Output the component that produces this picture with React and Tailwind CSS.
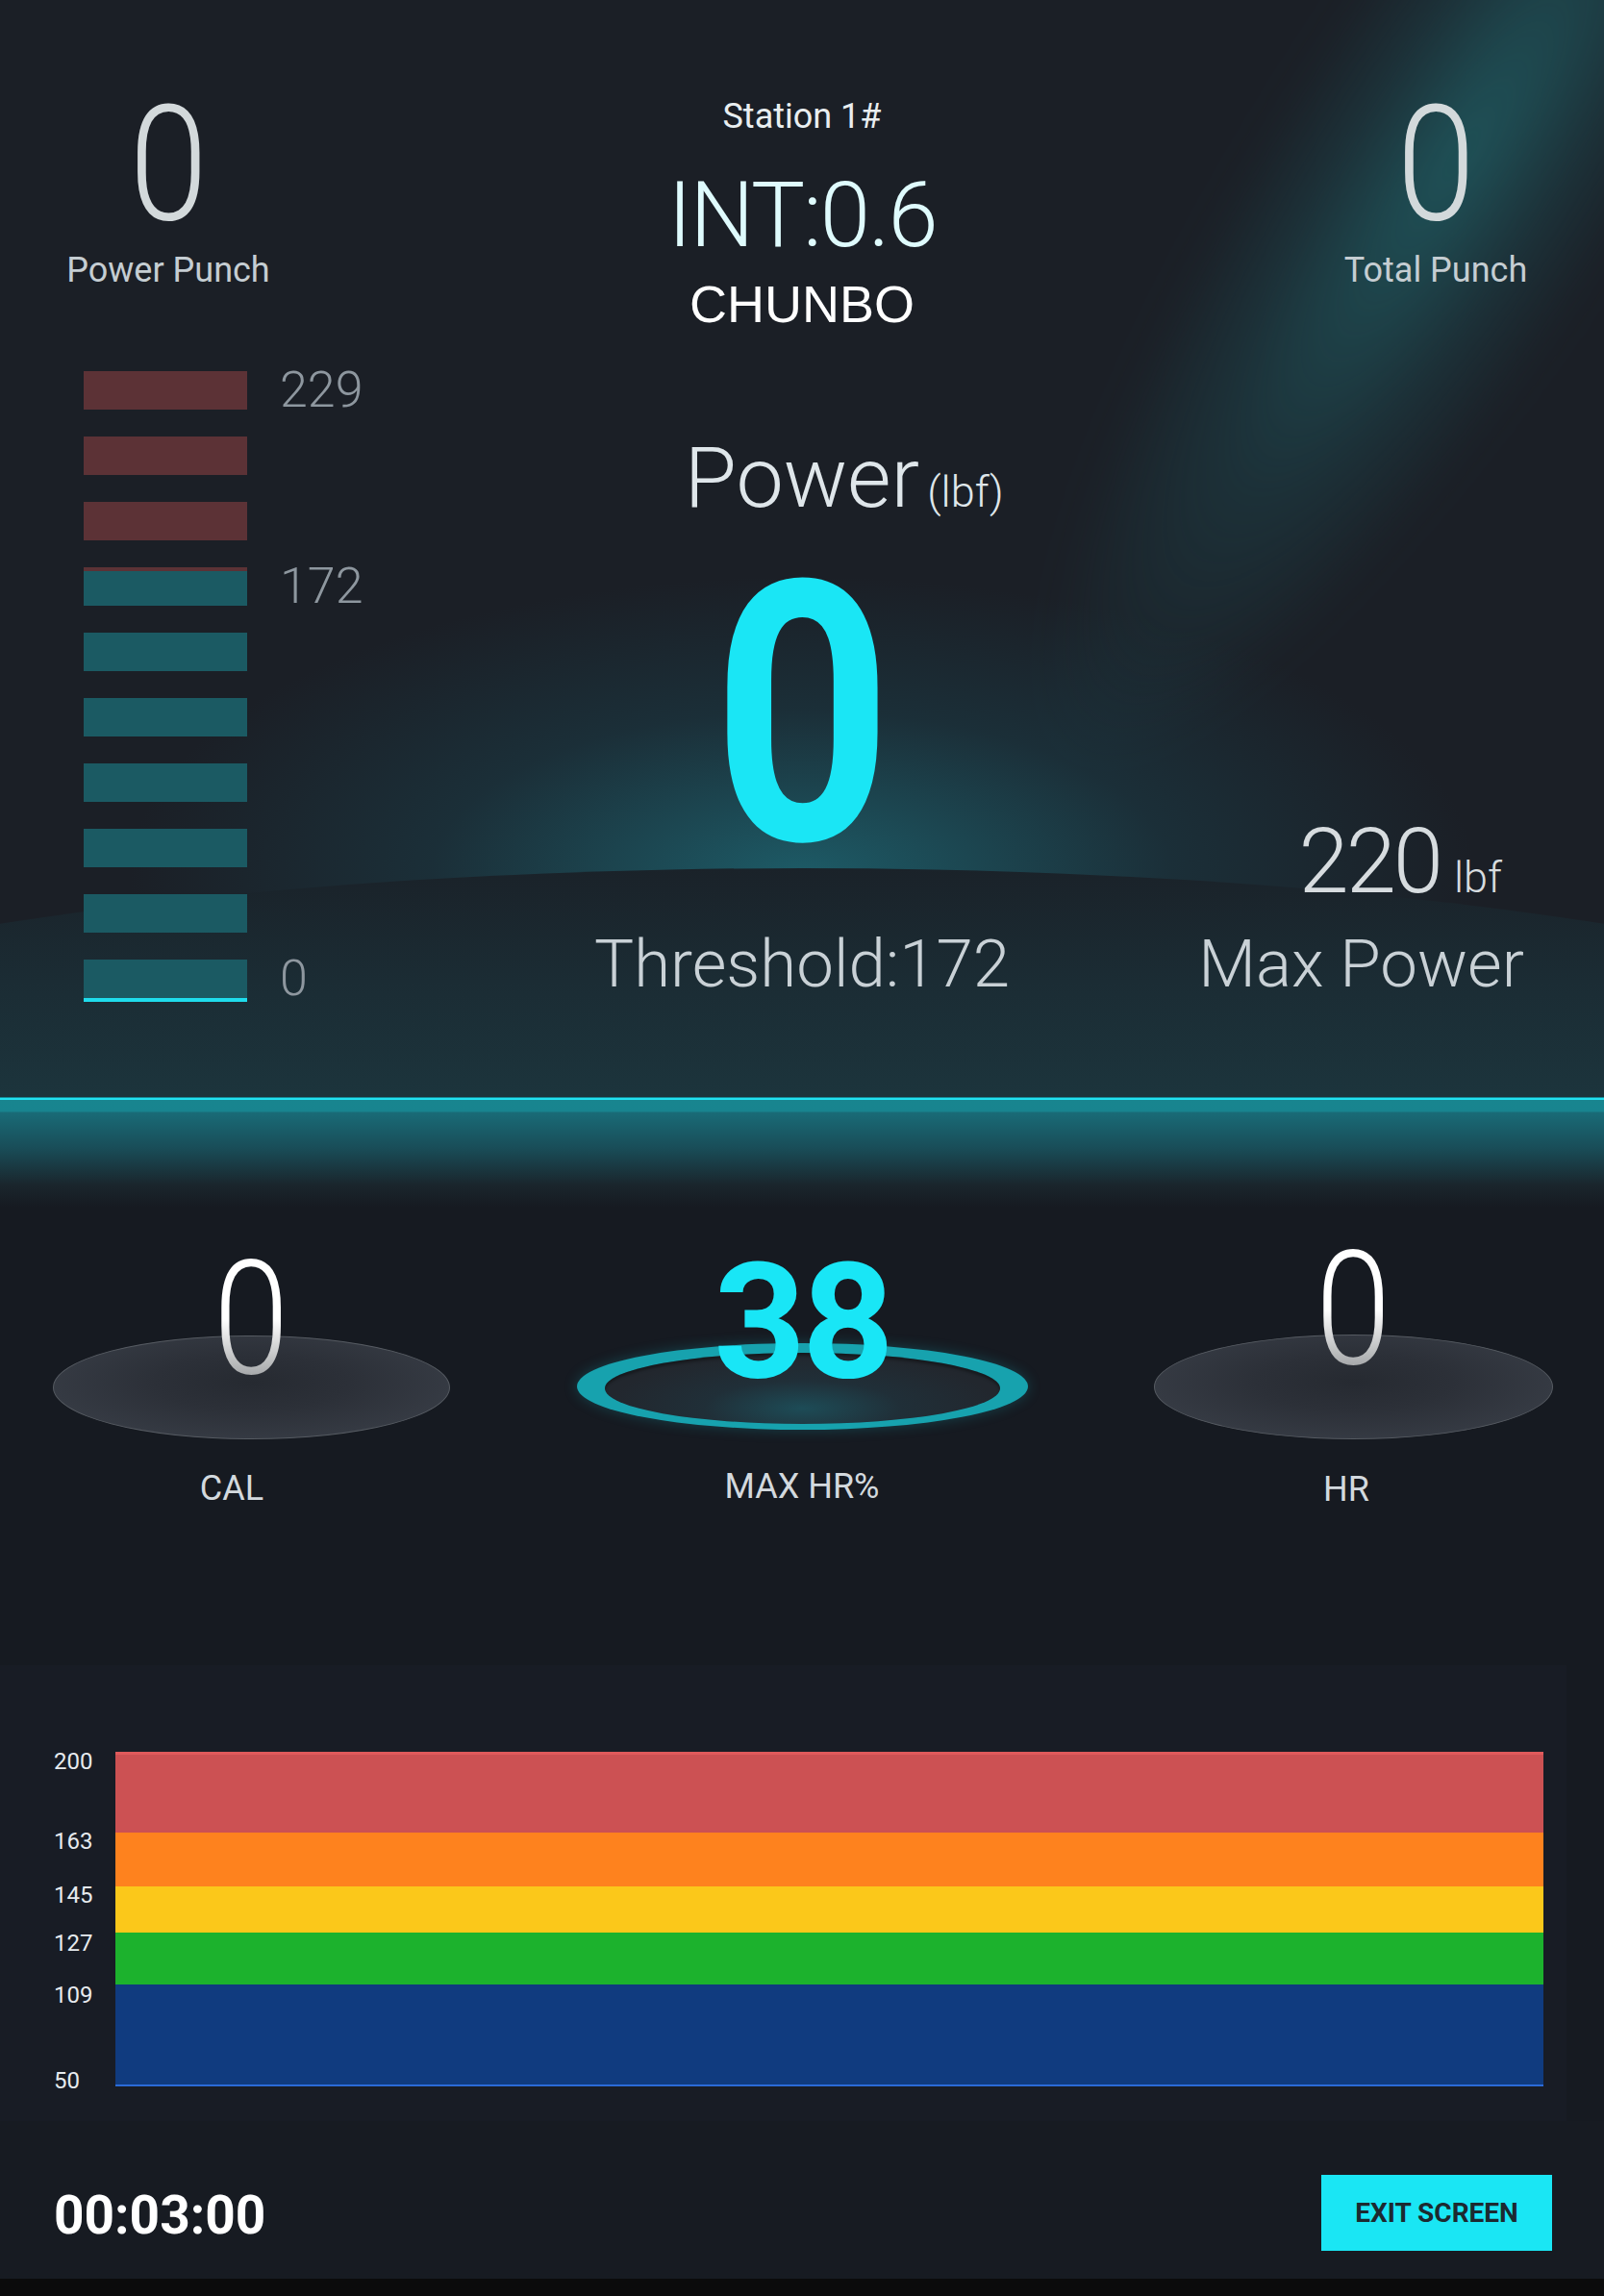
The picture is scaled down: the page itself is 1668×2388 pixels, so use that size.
export default function App() {
  const bars = [
    { c: "bg-[#5c3236]", label: "229" },
    { c: "bg-[#5c3236]" },
    { c: "bg-[#5c3236]" },
    { c: "bg-[#1b5a63] shadow-[inset_0_4px_0_#5c3236]", label: "172" },
    { c: "bg-[#1b5a63]" },
    { c: "bg-[#1b5a63]" },
    { c: "bg-[#1b5a63]" },
    { c: "bg-[#1b5a63]" },
    { c: "bg-[#1b5a63]" },
    { c: "bg-[#1b5a63] shadow-[0_4px_0_#1fdcec]", label: "0" },
  ];

  return (
    <div className="w-[1668px] min-h-[2388px] overflow-hidden bg-[#161a21] font-['Roboto','Liberation_Sans',sans-serif]">
      {/* TOP SECTION */}
      <section className="relative h-[1141px] overflow-hidden bg-[#1b1f26]">
        {/* light beam top right */}
        <div className="pointer-events-none absolute left-[1330px] top-[-590px] h-[1500px] w-[380px] rotate-[33deg] bg-[radial-gradient(closest-side,rgba(32,96,102,0.8),rgba(30,78,86,0.38)_55%,transparent)] blur-[20px]" />
        {/* glow above arc */}
        <div className="pointer-events-none absolute left-[134px] top-[600px] h-[620px] w-[1400px] bg-[radial-gradient(closest-side,rgba(29,94,106,0.95),rgba(27,66,78,0.45)_55%,transparent)]" />
        {/* arc */}
        <div className="pointer-events-none absolute left-[-566px] top-[903px] h-[586px] w-[2800px] rounded-[50%] bg-[linear-gradient(180deg,#1a2229_0%,#1b2c34_20%,#1c343c_40%)]" />

        <div className="relative">
          {/* header */}
          <div className="grid h-[380px] grid-cols-[350px_968px_350px]">
            <div className="flex flex-col items-center pt-[88px]">
              <div className="scale-x-[0.88] text-[167px] font-light leading-none text-[#d3d9db]">0</div>
              <div className="mt-[8px] whitespace-nowrap text-[36px] leading-none text-[#c5cdd2]">Power Punch</div>
            </div>
            <div className="flex flex-col items-center pt-[103px]">
              <div className="whitespace-nowrap text-[36px] leading-none text-[#e9eef0]">Station 1#</div>
              <div className="mt-[38px] whitespace-nowrap text-[94px] font-light leading-none tracking-[-2px] text-[#dffbfd]">INT:0.6</div>
              <div className="mt-[18px] font-['Liberation_Sans',sans-serif] text-[54px] leading-none text-white">CHUNBO</div>
            </div>
            <div className="flex flex-col items-center pt-[88px]">
              <div className="scale-x-[0.88] text-[167px] font-light leading-none text-[#d3d9db]">0</div>
              <div className="mt-[8px] whitespace-nowrap text-[36px] leading-none text-[#c5cdd2]">Total Punch</div>
            </div>
          </div>

          {/* middle */}
          <div className="grid grid-cols-[350px_968px_350px]">
            <div className="flex flex-col gap-[28px] pl-[87px] pt-[6px]">
              {bars.map((b, i) => (
                <div key={i} className="flex h-[40px] items-center">
                  <div className={`h-[40px] w-[170px] shrink-0 ${b.c}`} />
                  {b.label && (
                    <span className="ml-[34px] shrink-0 whitespace-nowrap text-[52px] font-light leading-none text-[#8e979f]">{b.label}</span>
                  )}
                </div>
              ))}
            </div>
            <div className="flex flex-col items-center pt-[73px]">
              <div className="grid w-full grid-cols-[1fr_auto_1fr] items-baseline">
                <span />
                <span className="text-[88px] font-light leading-none text-[#dfe6ea]">Power</span>
                <span className="ml-[8px] text-[45px] font-light leading-none text-[#dfe6ea]">(lbf)</span>
              </div>
              <div className="mt-[14px] scale-x-[0.86] text-[378px] font-bold leading-none text-[#1ae6f5]">0</div>
              <div className="mt-[35px] whitespace-nowrap text-[69px] font-light leading-none text-[#c9d1d6]">Threshold:172</div>
            </div>
            <div className="flex flex-col items-end justify-end pb-[1px] pr-[83px]">
              <div className="mr-[23px] flex items-baseline whitespace-nowrap">
                <span className="text-[94px] font-light leading-none tracking-[-3px] text-[#d7dcdf]">220</span>
                <span className="ml-[14px] text-[45px] font-light leading-none text-[#d7dcdf]">lbf</span>
              </div>
              <div className="mt-[25px] shrink-0 whitespace-nowrap text-[69px] font-light leading-none text-[#c9d1d6]">Max Power</div>
            </div>
          </div>
        </div>
      </section>

      {/* divider line */}
      <div className="h-[3px] border-t border-[#158e9a] bg-[#22e0f0]" />
      <div className="h-[112px] bg-[linear-gradient(180deg,#18858f_0px,#18848f_12px,#196b77_13px,#194d58_50px,#1a262d_88px,#161a21_112px)]" />

      {/* stats */}
      <div className="flex items-start justify-center gap-[103px]">
        <div className="flex w-[470px] flex-col items-center pt-[33px]">
          <div className="relative z-10 scale-x-[0.85] bg-[linear-gradient(180deg,#ffffff_50%,#a9abad_84%)] bg-clip-text text-[166px] font-light leading-none text-transparent">0</div>
          <div className="-mt-[66px] h-[108px] w-[413px] rounded-[50%] border border-[#565b62] bg-[radial-gradient(ellipse_at_50%_45%,#262a31_0%,#2c3038_35%,#363b44_75%)]" />
          <div className="mr-[40px] mt-[33px] text-[36px] leading-none text-[#d3d9de]">CAL</div>
        </div>
        <div className="flex w-[470px] flex-col items-center pt-[36px]">
          <div className="relative z-10 text-[167px] font-bold leading-none tracking-[-4px] text-[#19e6f6]">38</div>
          <div className="-mt-[62px] flex h-[90px] w-[469px] justify-center rounded-[50%] bg-[#17a2ae] shadow-[0_0_14px_rgba(23,162,174,0.3)]">
            <div className="mt-[10px] h-[74px] w-[411px] rounded-[50%] bg-[radial-gradient(ellipse_at_50%_78%,#1d4c57_0%,#202f38_35%,#22272e_70%)] shadow-[inset_0_3px_3px_rgba(0,0,0,0.35)]" />
          </div>
          <div className="mt-[41px] whitespace-nowrap text-[36px] leading-none text-[#d3d9de]">MAX HR%</div>
        </div>
        <div className="flex w-[470px] flex-col items-center pt-[23px]">
          <div className="relative z-10 scale-x-[0.85] bg-[linear-gradient(180deg,#ffffff_50%,#a9abad_84%)] bg-clip-text text-[166px] font-light leading-none text-transparent">0</div>
          <div className="-mt-[57px] h-[109px] w-[415px] rounded-[50%] border border-[#565b62] bg-[radial-gradient(ellipse_at_50%_45%,#262a31_0%,#2c3038_35%,#363b44_75%)]" />
          <div className="mr-[14px] mt-[34px] text-[36px] leading-none text-[#d3d9de]">HR</div>
        </div>
      </div>

      {/* chart panel */}
      <div className="mt-[165px] w-[1629px] bg-[#181c25] pb-[36px] pr-[24px] pt-[90px]">
        <div className="flex h-[84px]">
          <div className="-mt-[2px] w-[120px] pl-[56px] text-[24px] leading-none text-[#e6eaee]">200</div>
          <div className="flex-1 border-t-[3px] border-[#e05a5c] bg-[#cc5153]" />
        </div>
        <div className="flex h-[56px]">
          <div className="-mt-[3px] w-[120px] pl-[56px] text-[24px] leading-none text-[#e6eaee]">163</div>
          <div className="flex-1 bg-[#fe821e]" />
        </div>
        <div className="flex h-[48px]">
          <div className="-mt-[3px] w-[120px] pl-[56px] text-[24px] leading-none text-[#e6eaee]">145</div>
          <div className="flex-1 bg-[#fbc81a]" />
        </div>
        <div className="flex h-[54px]">
          <div className="-mt-[1px] w-[120px] pl-[56px] text-[24px] leading-none text-[#e6eaee]">127</div>
          <div className="flex-1 bg-[#1cb22d]" />
        </div>
        <div className="flex h-[106px]">
          <div className="-mb-[6px] -mt-[1px] flex w-[120px] flex-col justify-between pl-[56px] text-[24px] leading-none text-[#e6eaee]">
            <span>109</span>
            <span>50</span>
          </div>
          <div className="flex-1 border-b-2 border-[#2b6bd8] bg-[#103b7f]" />
        </div>
      </div>

      {/* footer */}
      <div className="flex h-[164px] items-start justify-between bg-[#171b22] pl-[56px] pr-[54px]">
        <div className="mt-[71px] text-[55px] font-bold leading-none text-white">00:03:00</div>
        <button className="mt-[56px] flex h-[79px] w-[240px] items-center justify-center bg-[#1ae6f4] text-[28px] font-bold leading-none text-[#1c2a30]">
          EXIT SCREEN
        </button>
      </div>
      <div className="h-[18px] bg-[#0b0b0c]" />
    </div>
  );
}
